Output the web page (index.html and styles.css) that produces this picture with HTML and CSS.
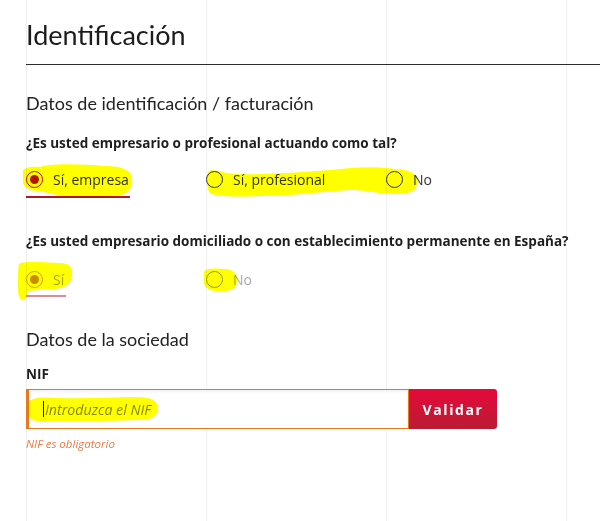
FILE: index.html
```html
<!DOCTYPE html>
<html lang="es">
<head>
<meta charset="utf-8">
<title>Identificación</title>
<link rel="stylesheet" href="styles.css">
</head>
<body>
<div class="page">
  <h1 class="title">Identificación</h1>
  <div class="rule"></div>

  <h2 class="section">Datos de identificación / facturación</h2>
  <p class="question">¿Es usted empresario o profesional actuando como tal?</p>
  <div class="radios">
    <label class="radio is-checked"><span class="circle"></span><span class="lbl">Sí, empresa</span></label>
    <label class="radio"><span class="circle"></span><span class="lbl">Sí, profesional</span></label>
    <label class="radio"><span class="circle"></span><span class="lbl">No</span></label>
  </div>

  <p class="question q2">¿Es usted empresario domiciliado o con establecimiento permanente en España?</p>
  <div class="radios r2 is-disabled">
    <label class="radio is-checked"><span class="circle"></span><span class="lbl">Sí</span></label>
    <label class="radio"><span class="circle"></span><span class="lbl">No</span></label>
  </div>

  <h2 class="section s2">Datos de la sociedad</h2>
  <p class="field-label">NIF</p>
  <div class="nif-row">
    <div class="nif-input"><span class="caret"></span><span class="placeholder">Introduzca el NIF</span></div>
    <button class="btn">Validar</button>
  </div>
  <p class="error">NIF es obligatorio</p>
</div>

<svg class="marks" width="600" height="521" viewBox="0 0 600 521">
  <path d="M23 172 C22 168 30 166 40 167 C52 163 80 164 105 166 C122 166 131 170 132 178 C133 188 128 194 118 196 C98 199 78 197 62 196 C52 194 45 192 38 191 C28 191 22 186 23 180 Z"/>
  <path d="M207 176 C207 168 214 170 226 173 C250 176 290 173 330 170 C355 167 375 166 395 169 C408 170 416 172 417 180 C418 190 412 193 402 194 C380 195 365 189 350 190 C320 192 290 196 260 196 C240 197 222 197 212 194 C207 192 207 184 207 176 Z"/>
  <path d="M19 264 C22 261 40 262 60 263 C70 263 73 268 72 276 C71 284 66 288 55 289 C45 290 33 290 27 291 C27 295 27 299 24 300 C20 301 18 296 18 288 C18 278 18 268 19 264 Z"/>
  <path d="M204 272 C205 268 215 268 226 269 C234 270 237 274 237 280 C237 287 233 291 224 291 C214 292 205 290 204 283 Z"/>
  <path d="M29 402 C32 397 45 397 60 398 C85 399 110 397 135 397 C150 397 158 400 158 408 C158 416 152 420 140 420 C115 421 90 421 65 421 C48 422 35 423 30 418 C27 414 27 406 29 402 Z"/>
</svg>
</body>
</html>
```

FILE: styles.css
```css
html, body {
  margin: 0;
  padding: 0;
  background: #fff;
}

body {
  width: 600px;
  height: 521px;
  overflow: hidden;
  position: relative;
  font-family: "Open Sans", "Noto Sans", sans-serif;
  color: #222;
  background-image:
    linear-gradient(to right, transparent 26px, #eeeeee 26px, #eeeeee 27px, transparent 27px),
    linear-gradient(to right, transparent 206px, #f0f0f0 206px, #f0f0f0 207px, transparent 207px),
    linear-gradient(to right, transparent 386px, #f0f0f0 386px, #f0f0f0 387px, transparent 387px),
    linear-gradient(to right, transparent 566px, #f0f0f0 566px, #f0f0f0 567px, transparent 567px);
}

.page {
  padding-left: 26px;
}

.title {
  margin: 0;
  padding-top: 18px;
  font-family: "Lato", "Open Sans", sans-serif;
  font-weight: 400;
  font-size: 27px;
  line-height: 34px;
  color: #1c1c1c;
}

.rule {
  margin-top: 12px;
  height: 1px;
  background: #2b2b2b;
}

.section {
  margin: 26px 0 0;
  font-family: "Lato", "Open Sans", sans-serif;
  font-weight: 400;
  font-size: 18px;
  line-height: 24px;
  color: #222;
}

.section.s2 {
  margin-top: 31px;
}

.question {
  margin: 19px 0 0;
  font-weight: 700;
  font-size: 13.5px;
  line-height: 18px;
  color: #1e1e1e;
}

.question.q2 {
  margin-top: 36px;
}

.radios {
  display: grid;
  grid-template-columns: 180px 180px 180px;
  margin-top: 10px;
}

.radios.r2 {
  margin-top: 12px;
}

.radio {
  display: flex;
  align-items: center;
  gap: 10px;
  height: 34px;
  font-size: 14px;
  color: #333;
  position: relative;
}

.circle {
  box-sizing: border-box;
  width: 17px;
  height: 17px;
  border-radius: 50%;
  border: 1px solid #333;
  background: #fff;
  flex: none;
  display: flex;
  align-items: center;
  justify-content: center;
}

.radio.is-checked .circle {
  border: 1.5px solid #b51424;
}

.radio.is-checked .circle::after {
  content: "";
  width: 9px;
  height: 9px;
  border-radius: 50%;
  background: #b51424;
}

.radio.is-checked {
  justify-self: start;
}

.radio.is-checked::after {
  content: "";
  position: absolute;
  left: 0;
  right: -1px;
  bottom: -2px;
  height: 2px;
  background: #b3162b;
}

.radios.is-disabled .radio {
  color: #a9a9a9;
}

.radios.is-disabled .circle {
  border-color: #999;
}

.radios.is-disabled .radio.is-checked .circle {
  border-color: #d4a246;
}

.radios.is-disabled .radio.is-checked .circle::after {
  background: #cc8a12;
}

.radios.is-disabled .radio.is-checked::after {
  right: -2px;
  bottom: -1px;
  background: #de8a92;
}

.field-label {
  margin: 14px 0 0;
  font-weight: 700;
  font-size: 13.5px;
  line-height: 18px;
  color: #1e1e1e;
}

.nif-row {
  display: flex;
  margin-top: 6px;
  height: 40px;
}

.nif-input {
  box-sizing: border-box;
  width: 383px;
  height: 40px;
  border: 1px solid #e8791e;
  border-left: 3px solid #e8791e;
  display: flex;
  align-items: center;
  padding-left: 14px;
  background: #fff;
  box-shadow: inset 0 2px 3px rgba(0,0,0,0.06);
}

.caret {
  width: 1px;
  height: 16px;
  background: #111;
  margin-right: 1px;
}

.placeholder {
  font-style: italic;
  font-size: 14.2px;
  color: #888;
}

.btn {
  box-sizing: border-box;
  width: 88px;
  height: 40px;
  border: none;
  border-radius: 0 3px 3px 0;
  background: linear-gradient(to bottom, #e6093a 0%, #b91c33 100%);
  color: #fff;
  font-family: "Open Sans", sans-serif;
  font-weight: 700;
  font-size: 14px;
  letter-spacing: 1.6px;
  padding: 0;
}

.error {
  margin: 8px 0 0;
  font-style: italic;
  font-size: 11.5px;
  line-height: 14px;
  color: #ee7a45;
}

.marks {
  position: absolute;
  left: 0;
  top: 0;
  pointer-events: none;
  mix-blend-mode: multiply;
}

.marks path {
  fill: #ffff00;
}
```
